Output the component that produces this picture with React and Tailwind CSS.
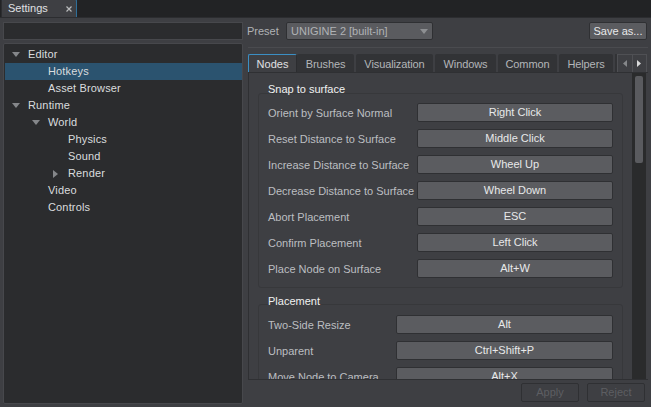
import React from 'react';

const font = "font-['Liberation_Sans','Noto_Sans',sans-serif]";

const treeRows = [
    { label: 'Editor', indent: 0, arrow: 'down' },
    { label: 'Hotkeys', indent: 1, active: true },
    { label: 'Asset Browser', indent: 1 },
    { label: 'Runtime', indent: 0, arrow: 'down' },
    { label: 'World', indent: 1, arrow: 'down' },
    { label: 'Physics', indent: 2 },
    { label: 'Sound', indent: 2 },
    { label: 'Render', indent: 2, arrow: 'right' },
    { label: 'Video', indent: 1 },
    { label: 'Controls', indent: 1 },
];

const tabs = [
    ['Brushes', 'w-[57px]'],
    ['Visualization', 'w-[77px]'],
    ['Windows', 'w-[61px]'],
    ['Common', 'w-[59px]'],
    ['Helpers', 'w-[54px]'],
];

const snapRows = [
    ['Orient by Surface Normal', 'Right Click'],
    ['Reset Distance to Surface', 'Middle Click'],
    ['Increase Distance to Surface', 'Wheel Up'],
    ['Decrease Distance to Surface', 'Wheel Down'],
    ['Abort Placement', 'ESC'],
    ['Confirm Placement', 'Left Click'],
    ['Place Node on Surface', 'Alt+W'],
];

const placementRows = [
    ['Two-Side Resize', 'Alt'],
    ['Unparent', 'Ctrl+Shift+P'],
    ['Move Node to Camera', 'Alt+X'],
];

const indents = ['w-[23px]', 'w-[43px]', 'w-[63px]'];

const TreeRow = ({ row }) => (
    <div className={`flex h-[17px] items-center text-[11px] tracking-[0.15px] text-[#dadcde] ${row.active ? 'bg-[#2b536f]' : ''}`}>
        <div className={`relative h-full shrink-0 ${indents[row.indent]}`}>
            {row.arrow === 'down' && (
                <svg width="8" height="5" className={`absolute top-[6px] ${row.indent === 0 ? 'left-[7px]' : 'left-[27px]'}`}>
                    <path d="M0 0H8L4 5Z" fill="#85878a" />
                </svg>
            )}
            {row.arrow === 'right' && (
                <svg width="5" height="8" className="absolute top-[5px] left-[48px]">
                    <path d="M0 0V8L5 4Z" fill="#85878a" />
                </svg>
            )}
        </div>
        <span>{row.label}</span>
    </div>
);

const KeyRow = ({ label, value, labelWidth }) => (
    <div className="flex h-[26px] shrink-0 items-start">
        <div className={`mt-[7px] shrink-0 whitespace-nowrap text-[11px] leading-[15px] text-[#bcbec1] ${labelWidth}`}>{label}</div>
        <button className="mt-[4px] flex h-[19px] w-full items-center justify-center rounded-[2px] border border-[#2f3033] bg-[#5b5c60] text-[11px] text-[#e8e9ea]">
            {value}
        </button>
    </div>
);

const Group = ({ title, rows, labelWidth, className, titleClass }) => (
    <div className={`relative ml-[9px] w-[365px] shrink-0 rounded-[3px] border border-[#37383b] pr-[9px] pb-[6px] pl-[9px] ${className}`}>
        <div className={`absolute left-[9px] text-[11px] leading-[15px] text-[#f0f1f1] ${titleClass}`}>{title}</div>
        {rows.map(([label, value]) => (
            <KeyRow key={label} label={label} value={value} labelWidth={labelWidth} />
        ))}
    </div>
);

export default function App() {
    return (
        <div className={`flex h-[407px] w-[651px] flex-col overflow-hidden bg-[#3e3f43] ${font}`}>
            <div className="flex h-[18px] shrink-0 items-end border-b border-[#2c2d30] bg-[#222325]">
                <div className="ml-px flex h-[18px] w-[76px] items-center justify-between rounded-t-[2px] border-t border-r border-l border-t-[#3b8fc4] border-r-[#2f6f99] border-l-[#2c2d30] bg-[#3e3f43] pr-[4px] pl-[6px] text-[11px] text-[#e0e1e3]">
                    <span>Settings</span>
                    <svg width="6" height="6" className="mt-px">
                        <path d="M0.5 0.5L5.5 5.5M5.5 0.5L0.5 5.5" stroke="#b9babc" strokeWidth="1.2" />
                    </svg>
                </div>
            </div>

            <div className="flex min-h-0 flex-1 pt-[4px] pr-[3px] pb-[3px] pl-[3px]">
                <div className="flex w-[240px] shrink-0 flex-col gap-[3px]">
                    <div className="h-[18px] shrink-0 border border-[#47484c] bg-[#2b2c2e]" />
                    <div className="flex-1 rounded-[2px] border border-[#47484c] bg-[#2b2c2e] pt-[2px] pl-px">
                        {treeRows.map((row) => (
                            <TreeRow key={row.label} row={row} />
                        ))}
                    </div>
                </div>

                <div className="ml-[5px] flex min-w-0 flex-1 flex-col">
                    <div className="flex h-[18px] shrink-0 items-center">
                        <span className="-ml-px w-[39px] pt-px text-[11px] text-[#b0b2b5]">Preset</span>
                        <div className="flex h-[18px] w-[147px] items-center justify-between rounded-[2px] border border-[#2f3033] bg-[#5a5b5f] pr-[4px] pl-[4px] text-[11px] text-[#b0b2b5]">
                            <span className="pt-px">UNIGINE 2 [built-in]</span>
                            <svg width="8" height="5"><path d="M0 0H8L4 5Z" fill="#8d8f92" /></svg>
                        </div>
                        <button className="mr-px ml-auto flex h-[18px] w-[58px] items-center justify-center rounded-[2px] border border-[#2f3033] bg-[#5b5c60] text-[11px] text-[#e8e9ea]">
                            Save as...
                        </button>
                    </div>

                    <div className="mt-[7px] h-px shrink-0 bg-[#4a4b4f]" />

                    <div className="mt-[6px] flex h-[18px] shrink-0 items-end">
                        <div className="flex h-[18px] w-[49px] items-center justify-center rounded-t-[2px] border-t border-r border-l border-t-[#3b8fc4] border-r-[#2c2d30] border-l-[#3b8fc4] bg-[#3e3f43] pt-px text-[11px] text-[#e0e1e3]">
                            Nodes
                        </div>
                        <div className="flex gap-[2px] overflow-hidden">
                            {tabs.map(([tab, width]) => (
                                <div key={tab} className={`flex h-[18px] shrink-0 items-center justify-center rounded-t-[2px] bg-[#323336] pt-[2px] text-[11px] tracking-[-0.1px] text-[#b4b6b9] ${width}`}>
                                    {tab}
                                </div>
                            ))}
                            <div className="h-[18px] w-[2px] shrink-0 bg-[#323336]" />
                        </div>
                        <div className="mr-px ml-auto flex h-[18px] w-[30px] border border-b-0 border-[#4f5054]">
                            <div className="flex flex-1 items-center justify-center border-r border-[#4f5054]">
                                <svg width="4" height="7"><path d="M4 0V7L0 3.5Z" fill="#85878a" /></svg>
                            </div>
                            <div className="flex flex-1 items-center justify-center">
                                <svg width="4" height="7"><path d="M0 0V7L4 3.5Z" fill="#d8d9da" /></svg>
                            </div>
                        </div>
                    </div>

                    <div className="flex h-[307px] shrink-0 overflow-hidden border-t border-l border-[#2f3033]">
                        <div className="flex min-w-0 flex-1 flex-col overflow-hidden pt-[20px]">
                            <Group title="Snap to surface" rows={snapRows} labelWidth="w-[149px]" className="pt-[5px]" titleClass="-top-[12px]" />
                            <Group title="Placement" rows={placementRows} labelWidth="w-[128px]" className="mt-[16px] pt-[6px]" titleClass="-top-[11px]" />
                        </div>
                        <div className="mr-[2px] w-[14px] shrink-0 bg-[#2a2b2c] px-[3px] pt-[3px]">
                            <div className="h-[87px] rounded-[2px] bg-[#5a5b5f]" />
                        </div>
                    </div>

                    <div className="flex flex-1 items-start justify-end gap-[8px] border-t border-[#2f3033] pt-[3px] pr-[3px]">
                        <button className="h-[19px] w-[58px] rounded-[2px] border border-[#2f3033] text-[11px] text-[#5d5e62]">Apply</button>
                        <button className="h-[19px] w-[58px] rounded-[2px] border border-[#2f3033] text-[11px] text-[#5d5e62]">Reject</button>
                    </div>
                </div>
            </div>
        </div>
    );
}
